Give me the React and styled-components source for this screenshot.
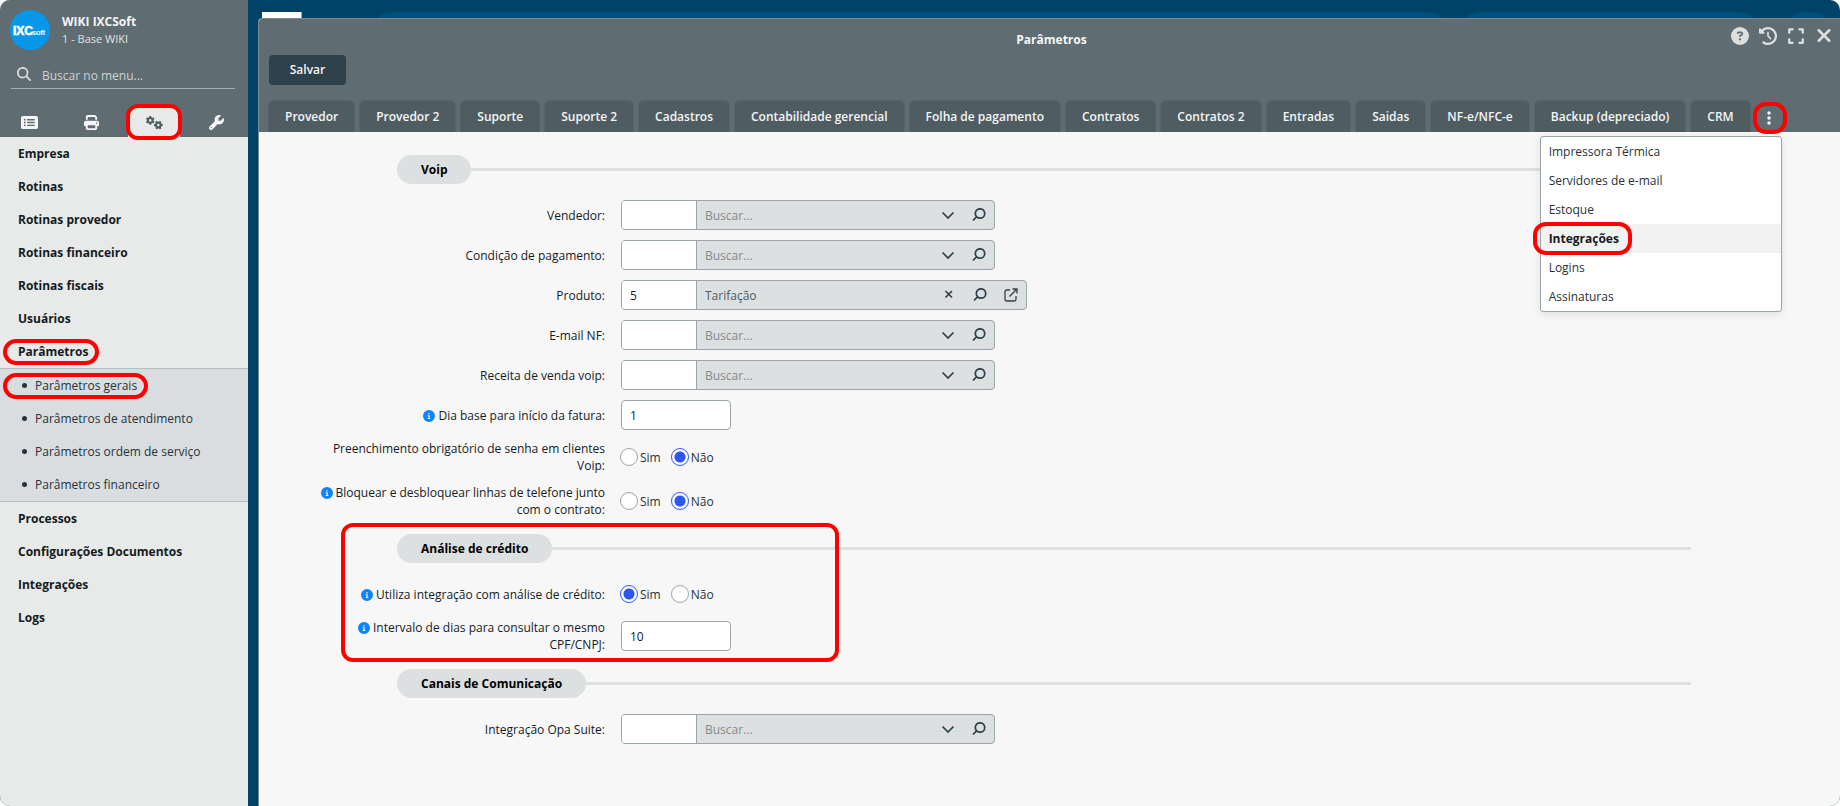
import React from 'react';
import styled, { createGlobalStyle, css } from 'styled-components';
import {
  FaCircleInfo,
  FaCircleQuestion,
  FaClockRotateLeft,
  FaEllipsisVertical,
  FaExpand,
  FaGears,
  FaMagnifyingGlass,
  FaPrint,
  FaRectangleList,
  FaWrench,
  FaXmark,
} from 'react-icons/fa6';

const GlobalStyle = createGlobalStyle`
  * {
    box-sizing: border-box;
  }

  body {
    margin: 0;
    background: #fff;
    color: #151b1e;
    font-family: 'Open Sans', 'Noto Sans', sans-serif;
    font-size: 12px;
  }

  button,
  input {
    font: inherit;
    color: inherit;
  }

  button {
    padding: 0;
    border: 0;
    background: none;
    cursor: pointer;
  }

  ul {
    margin: 0;
    padding: 0;
    list-style: none;
  }

  a {
    color: inherit;
    text-decoration: none;
  }
`;

// red marker laid over the element it points at
const ring = css`
  position: relative;

  &::after {
    content: '';
    position: absolute;
    z-index: 3;
    border: 4px solid #f00;
    border-radius: 13px;
    pointer-events: none;
  }
`;

const Page = styled.div`
  display: flex;
  min-height: 100vh;
  border-radius: 10px;
  overflow: hidden;
  background: #004366;
`;

const Sidebar = styled.aside`
  flex: 0 0 248px;
  background: #e7eae9;
`;

const SidebarHeader = styled.header`
  display: flex;
  flex-direction: column;
  height: 137px;
  padding-top: 10px;
  background: #5f6c72;
  color: #f5f5f5;
`;

const Company = styled.div`
  display: flex;
  gap: 12px;
  padding: 0 10px;

  h1 {
    margin: 3px 0 0;
    font-size: 12px;
    font-weight: 700;
    line-height: 18px;
  }

  p {
    margin: 0;
    font-size: 11px;
    line-height: 15px;
    color: #e0e4e4;
  }
`;

const MenuSearch = styled.label`
  display: flex;
  align-items: center;
  gap: 9px;
  height: 29px;
  margin: 10px 13px 0 11px;
  padding-left: 6px;
  border-bottom: 1px solid #a3afb3;
  font-size: 14px;
  color: #dce0e0;

  input {
    flex: 1;
    min-width: 0;
    padding: 3px 2px 1px;
    border: 0;
    outline: 0;
    background: none;
    font-size: 12px;

    &::placeholder {
      color: #cdd3d4;
      opacity: 1;
    }
  }
`;

const ModuleTabs = styled.nav`
  display: flex;
  justify-content: space-between;
  margin-top: auto;
  padding: 0 5px 0 3px;
`;

const ModuleTab = styled.button`
  display: flex;
  align-items: center;
  justify-content: center;
  width: 52px;
  height: 30px;
  border-radius: 8px 8px 0 0;
  font-size: ${(props) => props.$size || 15}px;

  ${(props) => props.$active && css`
    ${ring}
    background: #e7eae9;
    color: #4f5d63;

    &::after {
      inset: -3px -2px;
      border-radius: 12px;
    }
  `}
`;

const MenuLink = styled.a`
  display: flex;
  align-items: center;
  height: 33px;
  padding-left: 18px;
  font-size: 12px;
  font-weight: 700;
`;

const Submenu = styled.ul`
  border-top: 1px solid #b4bec1;
  border-bottom: 1px solid #b4bec1;
  background: #dadddf;
`;

const SubmenuLink = styled(MenuLink)`
  gap: 8px;
  padding-left: 22px;
  font-weight: 400;
  color: #26323a;

  &::before {
    content: '';
    width: 5px;
    height: 5px;
    border-radius: 50%;
    background: #26323a;
  }
`;

const Marked = styled.span`
  ${ring}

  &::after {
    inset: -4px -11px -5px ${(props) => props.$left}px;
  }
`;

const Desktop = styled.div`
  display: flex;
  flex: 1;
  flex-direction: column;
  min-width: 0;
`;

// strip of the desktop that stays visible behind the window
const Backdrop = styled.div`
  display: flex;
  align-items: flex-end;
  height: 18px;
  padding: 0 16px 0 14px;
  overflow: hidden;
`;

const BackdropLogo = styled.div`
  width: 40px;
  height: 6px;
  margin-right: 76px;
  border-right: 1px solid #8fb0c0;
  background: #fff;
`;

const BackdropPill = styled.div`
  flex: ${(props) => props.$grow || 'none'};
  width: 32px;
  height: 6px;
  margin-right: ${(props) => props.$gap || 0}px;
  border-radius: 18px 18px 0 0 / 6px 6px 0 0;
  background: #00507d;
`;

const Window = styled.section`
  display: flex;
  flex: 1;
  flex-direction: column;
  margin-left: 10px;
  border: 1px solid #7d898e;
  border-width: 1px 0 0 1px;
  border-radius: 4px 0 0 0;
  background: #f7f7f7;
`;

const WindowHeader = styled.header`
  padding: 10px 10px 0;
  border-radius: 3px 0 0 0;
  background: #5f6c72;
  color: #f5f5f5;
`;

const TitleBar = styled.div`
  display: grid;
  grid-template-columns: 1fr auto 1fr;
  align-items: start;
  height: 26px;
  margin-right: -4px;

  h2 {
    grid-column: 2;
    margin: 0;
    font-size: 12px;
    font-weight: 700;
    line-height: 22px;
  }
`;

const WindowActions = styled.div`
  display: flex;
  justify-content: flex-end;
  gap: 8px;
  color: #dce0e0;

  button {
    display: flex;
    align-items: center;
    justify-content: center;
    width: 20px;
    height: 13px;
    font-size: 18px;
  }

  button:last-child {
    font-size: 21px;
  }
`;

const SaveButton = styled.button`
  display: block;
  width: 77px;
  height: 30px;
  padding-bottom: 2px;
  border-radius: 4px;
  background: #2f414a;
  font-weight: 600;
`;

const Tabs = styled.nav`
  display: flex;
  gap: 4px;
  margin: 15px 0 0 -1px;
`;

const Tab = styled.button`
  height: 32px;
  padding: 0 16px;
  border: 1px solid #56646a;
  border-bottom: 0;
  border-radius: 6px 6px 0 0;
  background: #4f5d63;
  font-weight: 600;
  white-space: nowrap;
`;

const More = styled.div`
  position: relative;
`;

const MoreButton = styled.button`
  ${ring}
  display: flex;
  align-items: center;
  justify-content: center;
  width: 28px;
  height: 32px;
  padding-top: 4px;
  font-size: 16px;

  &::after {
    inset: 2px -4px -2px -2px;
  }
`;

const Dropdown = styled.ul`
  position: absolute;
  z-index: 2;
  top: 36px;
  right: 1px;
  width: 242px;
  border: 1px solid #9aa5a9;
  border-radius: 3px;
  background: #fff;
  box-shadow: 0 2px 8px rgba(0, 0, 0, 0.1);
`;

const DropdownItem = styled.a`
  display: flex;
  align-items: center;
  height: 29px;
  padding-left: 8px;
  color: #26323a;

  ${(props) => props.$active && css`
    background: #f2f2f2;
    color: #151b1e;
    font-weight: 700;

    span {
      ${ring}
    }

    span::after {
      inset: -8px -13px -8px -16px;
    }
  `}
`;

const Form = styled.form`
  display: flex;
  flex-direction: column;
  gap: 16px;
  padding: 23px 149px 60px 51px;
`;

const Group = styled.fieldset`
  display: flex;
  flex-direction: column;
  gap: 10px;
  min-width: 0;
  margin: 0;
  padding: 0;
  border: 0;

  ${(props) => props.$marked && css`
    ${ring}

    &::after {
      top: -11px;
      bottom: -9px;
      left: 31px;
      width: 490px;
      border-radius: 12px;
    }
  `}
`;

const GroupTitle = styled.div`
  display: flex;
  align-items: center;
  margin: 0 0 6px 87px;

  h3 {
    margin: 0;
    padding: 0 24px;
    border-radius: 15px;
    background: #dce0e0;
    color: #000;
    font-size: 12px;
    font-weight: 700;
    line-height: 29px;
  }

  &::after {
    content: '';
    flex: 1;
    height: 3px;
    border-radius: 0 2px 2px 0;
    background: #dce0e0;
  }
`;

const Row = styled.div`
  display: grid;
  grid-template-columns: 295px minmax(0, 1fr);
  align-items: center;
  column-gap: 16px;
  min-height: 30px;
`;

const Label = styled.label`
  line-height: 17px;
  text-align: right;

  svg {
    margin-right: 3px;
    color: #0a84ff;
    font-size: 12px;
    vertical-align: -2px;
  }
`;

const Box = styled.div`
  display: flex;
  width: ${(props) => (props.$open ? 406 : 374)}px;
  height: 30px;
  border: 1px solid #9aa5a9;
  border-radius: 4px;
  overflow: hidden;
  background: #dce0e0;
  color: #2f414a;

  input {
    min-width: 0;
    border: 0;
    outline: 0;
    padding: 0 8px;
  }

  input:first-child {
    width: 75px;
    border-right: 1px solid #9aa5a9;
    background: #fff;
    color: #151b1e;
  }

  input:nth-child(2) {
    flex: 1;
    background: none;
    color: #4f5d63;
  }

  input::placeholder {
    color: #84898b;
    opacity: 1;
  }

  button {
    display: flex;
    align-items: center;
    justify-content: center;
    width: 31px;
  }
`;

const NumberInput = styled.input`
  width: 110px;
  height: 30px;
  padding: 0 8px;
  border: 1px solid #9aa5a9;
  border-radius: 4px;
  outline: 0;
  background: #fff;
`;

const RadioGroup = styled.div`
  display: flex;
  gap: 10px;
  margin-left: -1px;
`;

const Radio = styled.label`
  display: flex;
  align-items: center;
  gap: 2px;
  color: #26323a;

  input {
    appearance: none;
    width: 18px;
    height: 18px;
    margin: 0;
    border: 1px solid #9aa5a9;
    border-radius: 50%;
    background: #fff;
  }

  input:checked {
    border-color: #2c56f2;
    background: radial-gradient(circle, #2c56f2 5px, #fff 6px);
  }
`;

const tabs = [
  'Provedor', 'Provedor 2', 'Suporte', 'Suporte 2', 'Cadastros', 'Contabilidade gerencial',
  'Folha de pagamento', 'Contratos', 'Contratos 2', 'Entradas', 'Saidas', 'NF-e/NFC-e',
  'Backup (depreciado)', 'CRM',
];

const moreTabs = [
  'Impressora Térmica', 'Servidores de e-mail', 'Estoque', 'Integrações', 'Logins', 'Assinaturas',
];

const menu = [
  { name: 'Empresa' },
  { name: 'Rotinas' },
  { name: 'Rotinas provedor' },
  { name: 'Rotinas financeiro' },
  { name: 'Rotinas fiscais' },
  { name: 'Usuários' },
  {
    name: 'Parâmetros',
    items: [
      'Parâmetros gerais',
      'Parâmetros de atendimento',
      'Parâmetros ordem de serviço',
      'Parâmetros financeiro',
    ],
  },
  { name: 'Processos' },
  { name: 'Configurações Documentos' },
  { name: 'Integrações' },
  { name: 'Logs' },
];

const strokes = {
  chevron: 'M1.5 4.5L7 10l5.5-5.5',
  clear: 'M3.5 3L10 9.5M10 3L3.5 9.5',
  search: 'M12.7 5.5a4.7 4.7 0 1 1-9.4 0a4.7 4.7 0 1 1 9.4 0M4.5 8.8L1 12.5',
  open: 'M6 2H2.7A1.7 1.7 0 0 0 1 3.7v7.6A1.7 1.7 0 0 0 2.7 13h7.6a1.7 1.7 0 0 0 1.7-1.7V8M5.5 8.5l7.2-7.2M8.5 1H13v4.5',
};

function FieldIcon({ name }) {
  return (
    <svg width="14" height="14" viewBox="0 0 14 14" fill="none" stroke="currentColor" strokeWidth={name === 'open' ? 1.3 : 1.7}>
      <path d={strokes[name]} />
    </svg>
  );
}

function Logo() {
  return (
    <svg width="40" height="40" viewBox="0 0 40 40" role="img" aria-label="IXCsoft">
      <circle cx="20" cy="20" r="20" fill="#0797e8" />
      <g fill="#fff" stroke="#fff" fontFamily="Liberation Sans, sans-serif">
        <text x="3" y="25" fontSize="12" fontWeight="700" strokeWidth="0.6">IXC</text>
        <text x="22" y="25" fontSize="8" strokeWidth="0.2">soft</text>
      </g>
    </svg>
  );
}

function LookupField({ id, label, code, value }) {
  return (
    <Row>
      <Label htmlFor={id}>{label}:</Label>
      <Box $open={Boolean(value)}>
        <input id={id} defaultValue={code} />
        <input aria-label={`Buscar ${label}`} placeholder="Buscar..." defaultValue={value} />
        <button type="button" aria-label={value ? 'Limpar' : 'Abrir lista'}>
          <FieldIcon name={value ? 'clear' : 'chevron'} />
        </button>
        <button type="button" aria-label="Pesquisar"><FieldIcon name="search" /></button>
        {value && <button type="button" aria-label="Abrir cadastro"><FieldIcon name="open" /></button>}
      </Box>
    </Row>
  );
}

function NumberField({ id, label, value }) {
  return (
    <Row>
      <Label htmlFor={id}><FaCircleInfo />{label}:</Label>
      <NumberInput id={id} defaultValue={value} />
    </Row>
  );
}

function YesNoField({ id, label, info, value }) {
  return (
    <Row>
      <Label as="span" id={id}>{info && <FaCircleInfo />}{label}:</Label>
      <RadioGroup role="radiogroup" aria-labelledby={id}>
        {['Sim', 'Não'].map((option) => (
          <Radio key={option}>
            <input type="radio" name={id} defaultChecked={option === value} />
            {option}
          </Radio>
        ))}
      </RadioGroup>
    </Row>
  );
}

function Menu() {
  return (
    <ul>
      {menu.map(({ name, items }) => (
        <li key={name}>
          <MenuLink href="#">{items ? <Marked $left={-15}>{name}</Marked> : name}</MenuLink>
          {items && (
            <Submenu>
              {items.map((item, idx) => (
                <li key={item}>
                  <SubmenuLink href="#">
                    {idx === 0 ? <Marked $left={-32}>{item}</Marked> : item}
                  </SubmenuLink>
                </li>
              ))}
            </Submenu>
          )}
        </li>
      ))}
    </ul>
  );
}

export default function App() {
  return (
    <Page>
      <GlobalStyle />
      <Sidebar>
        <SidebarHeader>
          <Company>
            <Logo />
            <div>
              <h1>WIKI IXCSoft</h1>
              <p>1 - Base WIKI</p>
            </div>
          </Company>
          <MenuSearch>
            <FaMagnifyingGlass />
            <input aria-label="Buscar no menu" placeholder="Buscar no menu..." />
          </MenuSearch>
          <ModuleTabs>
            <ModuleTab aria-label="Cadastros" $size={17}><FaRectangleList /></ModuleTab>
            <ModuleTab aria-label="Relatórios"><FaPrint /></ModuleTab>
            <ModuleTab aria-label="Configurações" $active $size={17}><FaGears /></ModuleTab>
            <ModuleTab aria-label="Ferramentas"><FaWrench /></ModuleTab>
          </ModuleTabs>
        </SidebarHeader>
        <Menu />
      </Sidebar>

      <Desktop>
        <Backdrop>
          <BackdropLogo />
          <BackdropPill $grow={1061} $gap={26} />
          <BackdropPill $grow={285} $gap={40} />
          <BackdropPill />
        </Backdrop>
        <Window>
          <WindowHeader>
            <TitleBar>
              <h2>Parâmetros</h2>
              <WindowActions>
                <button aria-label="Ajuda"><FaCircleQuestion /></button>
                <button aria-label="Histórico"><FaClockRotateLeft /></button>
                <button aria-label="Expandir"><FaExpand /></button>
                <button aria-label="Fechar"><FaXmark /></button>
              </WindowActions>
            </TitleBar>
            <SaveButton>Salvar</SaveButton>
            <Tabs>
              {tabs.map((tab) => <Tab key={tab}>{tab}</Tab>)}
              <More>
                <MoreButton aria-label="Mais abas"><FaEllipsisVertical /></MoreButton>
                <Dropdown>
                  {moreTabs.map((tab) => (
                    <li key={tab}>
                      <DropdownItem href="#" $active={tab === 'Integrações'}><span>{tab}</span></DropdownItem>
                    </li>
                  ))}
                </Dropdown>
              </More>
            </Tabs>
          </WindowHeader>

          <Form>
            <Group>
              <GroupTitle><h3>Voip</h3></GroupTitle>
              <LookupField id="vendedor" label="Vendedor" />
              <LookupField id="condicao" label="Condição de pagamento" />
              <LookupField id="produto" label="Produto" code="5" value="Tarifação" />
              <LookupField id="email" label="E-mail NF" />
              <LookupField id="receita" label="Receita de venda voip" />
              <NumberField id="dia" label="Dia base para início da fatura" value="1" />
              <YesNoField id="senha" label="Preenchimento obrigatório de senha em clientes Voip" value="Não" />
              <YesNoField id="bloqueio" info label="Bloquear e desbloquear linhas de telefone junto com o contrato" value="Não" />
            </Group>
            <Group $marked>
              <GroupTitle><h3>Análise de crédito</h3></GroupTitle>
              <YesNoField id="analise" info label="Utiliza integração com análise de crédito" value="Sim" />
              <NumberField id="intervalo" label="Intervalo de dias para consultar o mesmo CPF/CNPJ" value="10" />
            </Group>
            <Group>
              <GroupTitle><h3>Canais de Comunicação</h3></GroupTitle>
              <LookupField id="opa" label="Integração Opa Suite" />
            </Group>
          </Form>
        </Window>
      </Desktop>
    </Page>
  );
}
